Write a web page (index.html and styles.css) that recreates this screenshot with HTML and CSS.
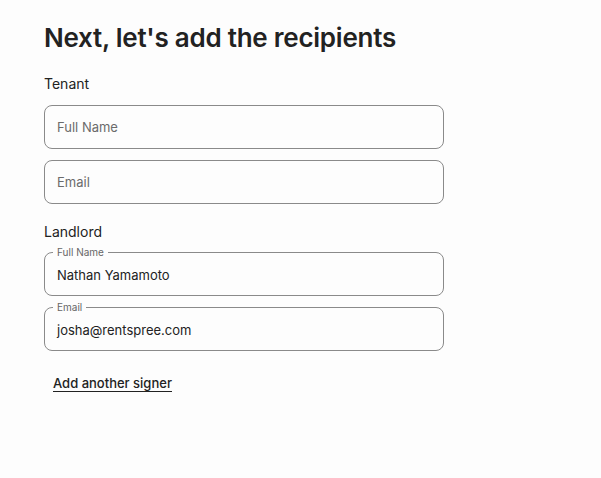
FILE: index.html
```html
<!DOCTYPE html>
<html>
<head>
<meta charset="utf-8">
<link rel="stylesheet" href="styles.css">
</head>
<body>
<main class="page">
  <h1 class="title">Next, let's add the recipients</h1>
  <section class="group">
    <h2 class="group-label">Tenant</h2>
    <div class="field empty"><span class="placeholder">Full Name</span></div>
    <div class="field empty"><span class="placeholder">Email</span></div>
  </section>
  <section class="group landlord">
    <h2 class="group-label">Landlord</h2>
    <fieldset class="field filled"><legend>Full Name</legend><span class="value">Nathan Yamamoto</span></fieldset>
    <fieldset class="field filled"><legend>Email</legend><span class="value">josha@rentspree.com</span></fieldset>
  </section>
  <a class="add-link" href="#">Add another signer</a>
</main>
</body>
</html>
```
FILE: styles.css
```css
html, body {
  margin: 0;
  padding: 0;
  background: #fdfdfd;
}
body {
  font-family: Inter, "Noto Sans", sans-serif;
  color: #222;
}
.page {
  padding: 22px 44px 0 44px;
  width: 400px;
  display: flex;
  flex-direction: column;
}
.title {
  margin: 0;
  font-size: 26px;
  font-weight: 600;
  line-height: 32px;
  color: #222;
  letter-spacing: -0.25px;
}
.group {
  display: flex;
  flex-direction: column;
  gap: 11px;
  margin-top: 20px;
}
.group-label {
  margin: 0;
  font-size: 14px;
  font-weight: 400;
  line-height: 20px;
  color: #222;
}
.landlord {
  margin-top: 18px;
  gap: 5px;
}
.landlord .group-label {
  margin-bottom: -1px;
}
.field {
  box-sizing: border-box;
  height: 44px;
  border: 1px solid #8a8a8a;
  border-radius: 8px;
  margin: 0;
  padding: 0 12px;
  display: flex;
  align-items: center;
  font-size: 13px;
}
.placeholder {
  color: #6b6b6b;
}
fieldset.field {
  display: block;
  height: 50px;
  padding: 0 12px;
  min-width: 0;
}
fieldset.field legend {
  font-size: 10px;
  line-height: 12px;
  color: #666;
  padding: 0 4px;
  margin-left: -4px;
}
.value {
  display: block;
  margin-top: 8px;
  color: #222;
  font-size: 13px;
  line-height: 18px;
}
.add-link {
  margin-top: 24px;
  margin-left: 9px;
  align-self: flex-start;
  font-size: 13px;
  font-weight: 500;
  color: #222;
  text-decoration: none;
  border-bottom: 1px solid #222;
  line-height: 16px;
}
```
